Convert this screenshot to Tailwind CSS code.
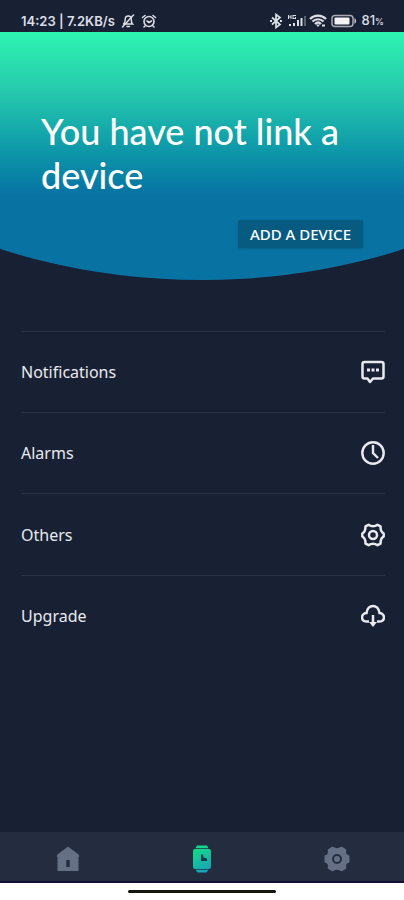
<!DOCTYPE html>
<html lang="en">

<head>
    <meta charset="UTF-8">
    <meta name="viewport" content="width=device-width, initial-scale=1.0">
    <title>Device</title>
    <script src="https://cdn.jsdelivr.net/npm/@tailwindcss/browser@4"></script>
</head>

<body class="min-h-screen flex flex-col bg-[#182034] text-white font-['Noto_Sans',sans-serif]">
    <!-- Status bar -->
    <div class="flex items-center justify-between h-8 pt-2.5 pl-[21px] pr-5 text-[#dcdee4] font-['Inter',sans-serif]">
        <div class="flex items-center gap-1.5 text-[13px] leading-5 font-semibold whitespace-nowrap">
            <span>14:23 | 7.2KB/s</span>
            <svg class="w-3.5 h-3.5" viewBox="0 0 14 14" fill="none" stroke="currentColor" stroke-width="1.500" stroke-linecap="round">
                <path d="M3 10h8.500c-1-1-1.200-2-1.200-4.500C10.300 3 9 2 7.300 2S4.200 3 4.200 5.500 4 9 2.500 10" />
                <path d="M6 12.500h2.500M12.500 1L1.500 13" />
            </svg>
            <svg class="w-4 h-3.5" viewBox="0 0 16 14" fill="none" stroke="currentColor" stroke-width="1.600" stroke-linecap="round">
                <circle cx="8" cy="7.500" r="5" />
                <path d="M1.500 3.500l2.500-2M14.500 3.500l-2.500-2M6 7l2 1.500 2.500-1.500M4 12l-1 1M12 12l1 1" />
            </svg>
        </div>
        <div class="flex items-center text-[13px] leading-5 font-medium">
            <svg class="w-3.5 h-4" viewBox="0 0 14 16" fill="none" stroke="currentColor" stroke-width="1.700">
                <path d="M3 4.500l8 7-4 3v-13l4 3-8 7" />
                <path d="M1 8h2M11 8h2" stroke-width="2" />
            </svg>
            <svg class="w-5 h-4 ml-1" viewBox="0 0 20 16" fill="currentColor">
                <path d="M1 2h1v1.500h1.500V2h1v4h-1V4.500H2V6H1zM5.500 2H9v1H6.500v2H8V4h1v2H5.500z" />
                <path d="M2 11h2v2H2zM6 10h2v3H6zM10 7h2v6h-2zM13.500 5h2v8h-2z" />
                <path d="M17 3h2v10h-2z" opacity=".35" />
            </svg>
            <svg class="w-4.5 h-4 ml-0.5" viewBox="0 0 18 16" fill="none" stroke="currentColor" stroke-width="2.200">
                <path d="M1 6c4.500-4.500 11.500-4.500 16 0M3.500 8.500c3-3 8-3 11 0M6 11c2-2 4-2 6 0" />
                <path d="M7 11.500h4l-2 2.500z" fill="currentColor" stroke="none" />
                <path d="M13 11.500h3v2h-3z" fill="currentColor" stroke="none" />
            </svg>
            <svg class="w-[26px] h-4 ml-1" viewBox="0 0 26 16" fill="none">
                <rect x="1" y="2.500" width="21" height="11" rx="3" stroke="#a8abb4" stroke-width="1.500" />
                <rect x="3.500" y="4.500" width="15" height="7" rx="1" fill="#f2f3f5" />
                <path d="M23.500 5c2 1.500 2 4.500 0 6z" fill="currentColor" />
            </svg>
            <span class="ml-1">81<span class="text-[9px]">%</span></span>
        </div>
    </div>

    <!-- Hero -->
    <section class="h-[248px] px-[41px] pt-[77px] bg-linear-to-b from-[#2ff4b1] from-0% via-[#25c9ac] via-24% to-[#0872a3] to-66% [clip-path:ellipse(103%_100%_at_50%_0)]">
        <h1 class="text-[36px] leading-11 font-medium font-['Lato',sans-serif]">You have not link a device</h1>
        <div class="flex justify-end mt-[23px]">
            <button type="button" class="h-7 px-3 rounded-xs bg-[#075b80] text-[15px] font-medium whitespace-nowrap shadow-sm">ADD A DEVICE</button>
        </div>
    </section>

    <!-- Menu -->
    <main class="grow pl-[21px] pr-[19px] pt-[51px] text-base text-[#e8eaee]">
        <a href="#" class="flex items-center justify-between h-[81px] border-t border-[#2a3245]">
            Notifications
            <svg class="w-6 h-6" viewBox="0 0 24 24" fill="none" stroke="currentColor" stroke-width="2.500" stroke-linejoin="round">
                <path d="M3.500 2h17q2 0 2 2v12.500q0 2-2 2H12L9 22l-2.500-3.500h-3q-2 0-2-2V4q0-2 2-2z" />
                <path d="M6 8.500h3v3H6zM10.500 8.500h3v3h-3zM15 8.500h3v3h-3z" fill="currentColor" stroke="none" />
            </svg>
        </a>
        <a href="#" class="flex items-center justify-between h-[81px] border-t border-[#2a3245]">
            Alarms
            <svg class="w-6 h-6" viewBox="0 0 24 24" fill="none" stroke="currentColor" stroke-width="2.400">
                <circle cx="12" cy="12" r="10.700" />
                <path d="M12 4v8l5 5" />
            </svg>
        </a>
        <a href="#" class="flex items-center justify-between h-[82px] border-t border-[#2a3245]">
            Others
            <svg class="w-6 h-6" viewBox="0 0 24 24" fill="none" stroke="currentColor" stroke-width="2.500" stroke-linejoin="round">
                <path d="M7.500 1.800Q9.500 3.300 12 3.300T16.500 1.800L19.500 3.400Q19.500 6.500 20.300 8T22.700 10.500V13.500Q21 14.500 20.300 16T19.500 20.600L16.500 22.200Q14.500 20.700 12 20.700T7.500 22.200L4.500 20.600Q4.500 17.500 3.700 16T1.300 13.500V10.500Q3 9.500 3.700 8T4.500 3.400Z" />
                <circle cx="12" cy="12" r="4" />
            </svg>
        </a>
        <a href="#" class="flex items-center justify-between h-[81px] border-t border-[#2a3245]">
            Upgrade
            <svg class="w-6 h-6" viewBox="0 0 24 24" fill="none" stroke="currentColor" stroke-width="2.500">
                <path d="M8 17.500H6C-0.500 17.500-0.500 9.500 5.500 9 6.500 -0.500 17.500 -0.500 18.500 9 24.500 9.500 24.500 17.500 18 17.500h-2" />
                <path d="M12 11v8" />
                <path d="M8 18h8l-4 5z" fill="currentColor" stroke="none" />
            </svg>
        </a>
    </main>

    <!-- Tab bar -->
    <nav class="grid grid-cols-3 h-[51px] pl-px bg-[#242d40] border-b-2 border-[#111136] text-[#657085]">
        <a href="#" aria-label="Home" class="flex items-center justify-center pt-1">
            <svg class="w-6 h-[26px]" viewBox="0 0 24 26" fill="currentColor">
                <path fill-rule="evenodd" d="M12 0.500L22.500 8.500Q23 9 23 10V11L22.500 11.500V24.500Q22.500 25 22 25H2Q1.500 25 1.500 24.500V11.500L1 11V10Q1 9 1.500 8.500zM10.300 14v7h3.400v-7z" />
            </svg>
        </a>
        <a href="#" aria-label="Device" class="flex items-center justify-center pt-1">
            <svg class="w-5 h-7" viewBox="0 0 20 28">
                <defs>
                    <linearGradient id="watch" gradientUnits="userSpaceOnUse" x1="2" y1="0" x2="18" y2="28">
                        <stop offset=".2" stop-color="#14d68b" />
                        <stop offset="1" stop-color="#159bc0" />
                    </linearGradient>
                </defs>
                <path fill="url(#watch)" d="M5 0.500h10l1.500 2.700h-13zM3.500 24.800h13l-2 2.700h-9zM3 4h14q2 0 2 2v16q0 2-2 2H3q-2 0-2-2V6q0-2 2-2z" />
                <path d="M9 9.500h2l.5 3 3.500 1v2.500H9z" fill="#113b4c" />
            </svg>
        </a>
        <a href="#" aria-label="Settings" class="flex items-center justify-center pt-1">
            <svg class="w-[26px] h-[26px]" viewBox="0 0 26 26" fill="currentColor" stroke="currentColor" stroke-width="1.500" stroke-linejoin="round">
                <path fill-rule="evenodd" d="M8.500 1.500Q11 3 13 3T17.500 1.500L21.500 4Q21 6.500 21.700 8T24.700 10V16Q22.400 16.500 21.700 18T21.500 22L17.500 24.500Q15 23 13 23T8.500 24.500L4.500 22Q5 19.500 4.300 18T1.300 16V10Q3.600 9.500 4.300 8T4.500 4Z" />
                <circle cx="13" cy="13" r="4" fill="none" stroke="#242d40" stroke-width="2" />
            </svg>
        </a>
    </nav>
    <div class="flex justify-center h-[17px] pt-[7px] bg-white">
        <div class="w-[148px] h-[3px] rounded-full bg-[#15150f]"></div>
    </div>
</body>

</html>
